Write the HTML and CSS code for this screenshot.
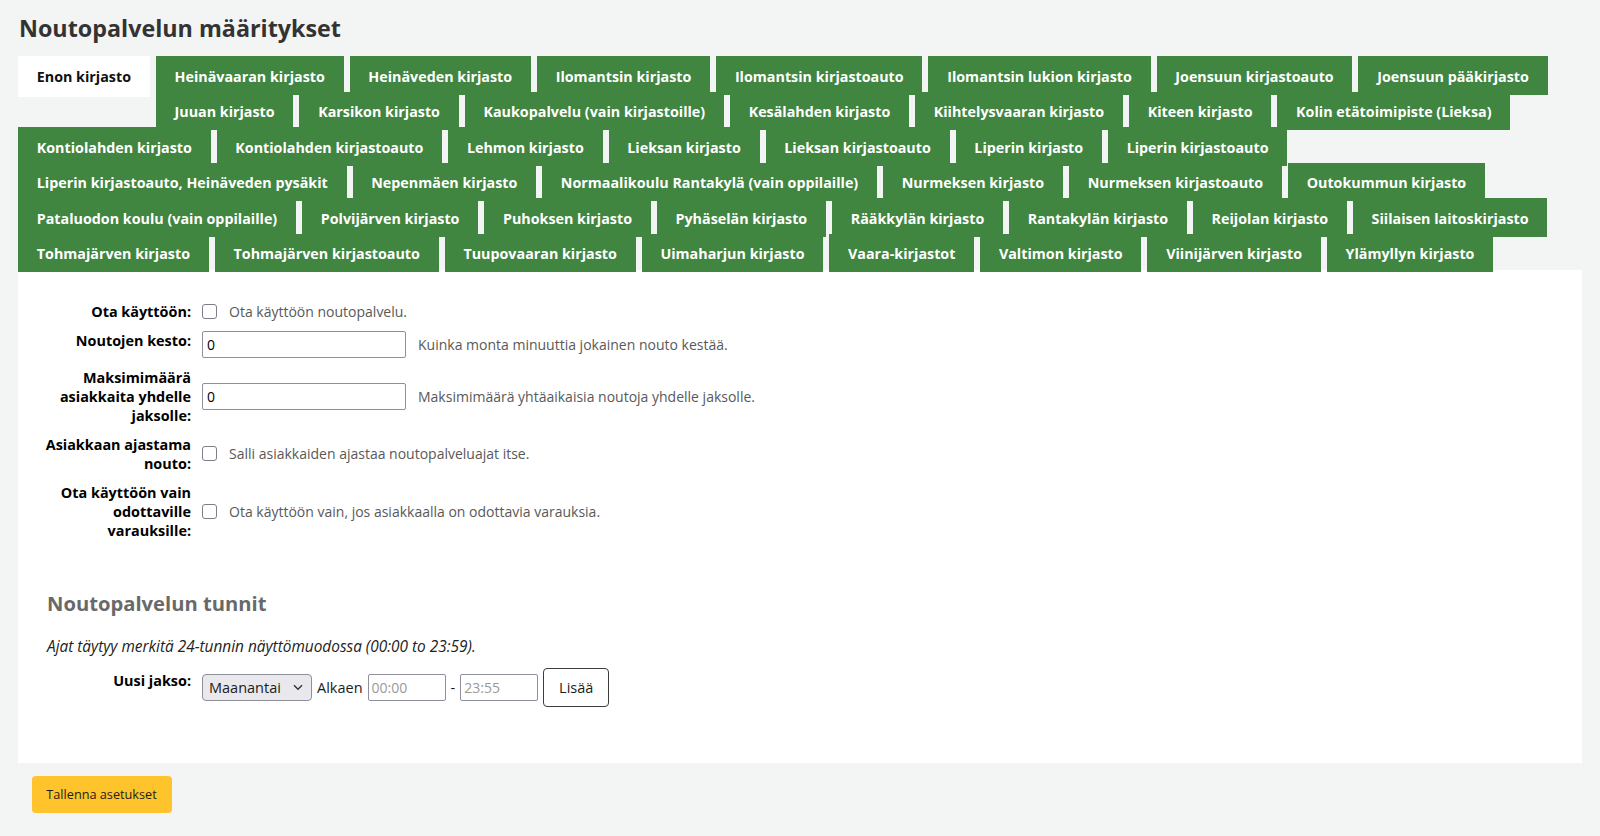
FILE: index.html
```html
<!DOCTYPE html>
<html lang="fi">
<head>
<meta charset="utf-8">
<title>Noutopalvelun määritykset</title>
<link rel="stylesheet" href="styles.css">
</head>
<body>
<main class="page">
  <h1 class="title">Noutopalvelun määritykset</h1>
  <div class="tabs">
    <ul class="tab-list">
      <li class="tab active"><a>Enon kirjasto</a></li>
      <li class="tab"><a>Heinävaaran kirjasto</a></li>
      <li class="tab"><a>Heinäveden kirjasto</a></li>
      <li class="tab"><a>Ilomantsin kirjasto</a></li>
      <li class="tab"><a>Ilomantsin kirjastoauto</a></li>
      <li class="tab"><a>Ilomantsin lukion kirjasto</a></li>
      <li class="tab"><a>Joensuun kirjastoauto</a></li>
      <li class="tab"><a>Joensuun pääkirjasto</a></li>
      <li class="tab"><a>Juuan kirjasto</a></li>
      <li class="tab"><a>Karsikon kirjasto</a></li>
      <li class="tab"><a>Kaukopalvelu (vain kirjastoille)</a></li>
      <li class="tab"><a>Kesälahden kirjasto</a></li>
      <li class="tab"><a>Kiihtelysvaaran kirjasto</a></li>
      <li class="tab"><a>Kiteen kirjasto</a></li>
      <li class="tab"><a>Kolin etätoimipiste (Lieksa)</a></li>
      <li class="tab"><a>Kontiolahden kirjasto</a></li>
      <li class="tab"><a>Kontiolahden kirjastoauto</a></li>
      <li class="tab"><a>Lehmon kirjasto</a></li>
      <li class="tab"><a>Lieksan kirjasto</a></li>
      <li class="tab"><a>Lieksan kirjastoauto</a></li>
      <li class="tab"><a>Liperin kirjasto</a></li>
      <li class="tab"><a>Liperin kirjastoauto</a></li>
      <li class="tab"><a>Liperin kirjastoauto, Heinäveden pysäkit</a></li>
      <li class="tab"><a>Nepenmäen kirjasto</a></li>
      <li class="tab"><a>Normaalikoulu Rantakylä (vain oppilaille)</a></li>
      <li class="tab"><a>Nurmeksen kirjasto</a></li>
      <li class="tab"><a>Nurmeksen kirjastoauto</a></li>
      <li class="tab"><a>Outokummun kirjasto</a></li>
      <li class="tab"><a>Pataluodon koulu (vain oppilaille)</a></li>
      <li class="tab"><a>Polvijärven kirjasto</a></li>
      <li class="tab"><a>Puhoksen kirjasto</a></li>
      <li class="tab"><a>Pyhäselän kirjasto</a></li>
      <li class="tab"><a>Rääkkylän kirjasto</a></li>
      <li class="tab"><a>Rantakylän kirjasto</a></li>
      <li class="tab"><a>Reijolan kirjasto</a></li>
      <li class="tab"><a>Siilaisen laitoskirjasto</a></li>
      <li class="tab"><a>Tohmajärven kirjasto</a></li>
      <li class="tab"><a>Tohmajärven kirjastoauto</a></li>
      <li class="tab"><a>Tuupovaaran kirjasto</a></li>
      <li class="tab"><a>Uimaharjun kirjasto</a></li>
      <li class="tab"><a>Vaara-kirjastot</a></li>
      <li class="tab"><a>Valtimon kirjasto</a></li>
      <li class="tab"><a>Viinijärven kirjasto</a></li>
      <li class="tab"><a>Ylämyllyn kirjasto</a></li>
    </ul>
    <div class="tab-panel">
      <ol class="rows">
        <li class="row">
          <label class="row-label">Ota käyttöön:</label>
          <span class="checkbox"></span>
          <span class="hint">Ota käyttöön noutopalvelu.</span>
        </li>
        <li class="row">
          <label class="row-label">Noutojen kesto:</label>
          <span class="text-input">0</span>
          <span class="hint">Kuinka monta minuuttia jokainen nouto kestää.</span>
        </li>
        <li class="row">
          <label class="row-label">Maksimimäärä asiakkaita yhdelle jaksolle:</label>
          <span class="text-input">0</span>
          <span class="hint">Maksimimäärä yhtäaikaisia noutoja yhdelle jaksolle.</span>
        </li>
        <li class="row">
          <label class="row-label">Asiakkaan ajastama nouto:</label>
          <span class="checkbox"></span>
          <span class="hint">Salli asiakkaiden ajastaa noutopalveluajat itse.</span>
        </li>
        <li class="row">
          <label class="row-label">Ota käyttöön vain odottaville varauksille:</label>
          <span class="checkbox"></span>
          <span class="hint">Ota käyttöön vain, jos asiakkaalla on odottavia varauksia.</span>
        </li>
      </ol>

      <h3 class="section-title">Noutopalvelun tunnit</h3>
      <p class="note">Ajat täytyy merkitä 24-tunnin näyttömuodossa (00:00 to 23:59).</p>

      <div class="slot-row">
        <label class="row-label slot-label">Uusi jakso:</label>
        <div class="slot-controls">
          <span class="select">Maanantai<svg class="chev" width="10" height="7" viewBox="0 0 10 7"><path d="M1 1.2 L5 5.2 L9 1.2" fill="none" stroke="#333" stroke-width="1.4"/></svg></span>
          <span class="word">Alkaen</span>
          <span class="time-input placeholder">00:00</span>
          <span class="word">-</span>
          <span class="time-input placeholder">23:55</span>
          <button class="btn-add" type="button">Lisää</button>
        </div>
      </div>
    </div>
  </div>
  <div class="actions">
    <button class="btn-save" type="button">Tallenna asetukset</button>
  </div>
</main>
</body>
</html>
```

FILE: styles.css
```css
* { box-sizing: border-box; }

html, body {
  margin: 0;
  padding: 0;
  background: #f3f4f4;
}

body {
  font-family: "Open Sans", "Noto Sans", sans-serif;
  font-size: 14px;
  color: #1e1e1e;
}

.page {
  padding: 0 18px;
}

.title {
  margin: 14px 0 13px 1px;
  font-size: 23.3px;
  line-height: 29px;
  font-weight: 700;
  color: #333333;
}

/* ---------- tabs ---------- */
.tab-list {
  list-style: none;
  margin: 0 0 1px 0;
  padding: 0;
}
.tab-list::after {
  content: "";
  display: block;
  clear: both;
}
.tab {
  float: left;
  margin: 0 6px -3px 0;
}
.tab a {
  display: block;
  padding: 11.5px 18.75px 8.5px;
  line-height: 18.5px;
  font-size: 14.3px;
  font-weight: 700;
  color: #ffffff;
  background: #408540;
  white-space: nowrap;
}
.tab.active a {
  background: #ffffff;
  color: #111111;
  padding-bottom: 11px;
}

/* ---------- panel ---------- */
.tab-panel {
  background: #ffffff;
  padding: 26.5px 29px 56px 29px;
}

.rows {
  list-style: none;
  margin: 0 0 0 -3px;
  padding: 0;
}
.row {
  display: flex;
  align-items: center;
  padding: 5px 0;
}
.row-label {
  flex: 0 0 147px;
  align-self: flex-start;
  margin-right: 11px;
  text-align: right;
  font-weight: 700;
  font-size: 14.4px;
  line-height: 19px;
  color: #000000;
}
.checkbox {
  flex: none;
  width: 15px;
  height: 15px;
  border: 1px solid #7d7d87;
  border-radius: 3px;
  background: #ffffff;
}
.text-input {
  flex: none;
  width: 204px;
  height: 27px;
  border: 1px solid #8f8f9d;
  border-radius: 2px;
  padding: 0 4px;
  line-height: 25px;
  font-size: 14px;
  color: #000;
}
.hint {
  margin-left: 12px;
  color: #595959;
  font-size: 14px;
  line-height: 19px;
}

.section-title {
  margin: 46px 0 21px 0;
  font-size: 20.2px;
  line-height: 25px;
  font-weight: 700;
  color: #696969;
}

.note {
  margin: 0 0 12.5px 0;
  font-style: italic;
  font-size: 15.4px;
  line-height: 19px;
  color: #222222;
}

.slot-row {
  display: flex;
  align-items: flex-start;
  margin-left: -3px;
}
.slot-label {
  margin-top: 3px;
}
.slot-controls {
  display: flex;
  align-items: center;
  gap: 5px;
  height: 39px;
}
.select {
  position: relative;
  width: 110px;
  height: 27px;
  border: 1px solid #8f8f9d;
  border-radius: 4px;
  background: #e9e9ed;
  padding: 0 6px;
  line-height: 25px;
  font-size: 14.5px;
  color: #1b1b1b;
}
.chev {
  position: absolute;
  right: 8px;
  top: 9px;
}
.word {
  font-size: 14.5px;
  color: #1b1b1b;
}
.time-input {
  width: 78px;
  height: 27px;
  border: 1px solid #8f8f9d;
  border-radius: 2px;
  padding: 0 3px;
  line-height: 25px;
  font-size: 14px;
}
.placeholder {
  color: #9a9a9a;
}
.btn-add {
  width: 66px;
  height: 39px;
  border: 1px solid #3d3d3d;
  border-radius: 4px;
  background: #ffffff;
  font-family: inherit;
  font-size: 14.5px;
  color: #1b1b1b;
}

/* ---------- actions ---------- */
.actions {
  padding: 12.5px 0 0 13.5px;
}
.btn-save {
  width: 140px;
  height: 37px;
  border: 0;
  border-radius: 4px;
  background: #ffc32b;
  font-family: inherit;
  font-size: 12.7px;
  color: #1e1e1e;
}
```
